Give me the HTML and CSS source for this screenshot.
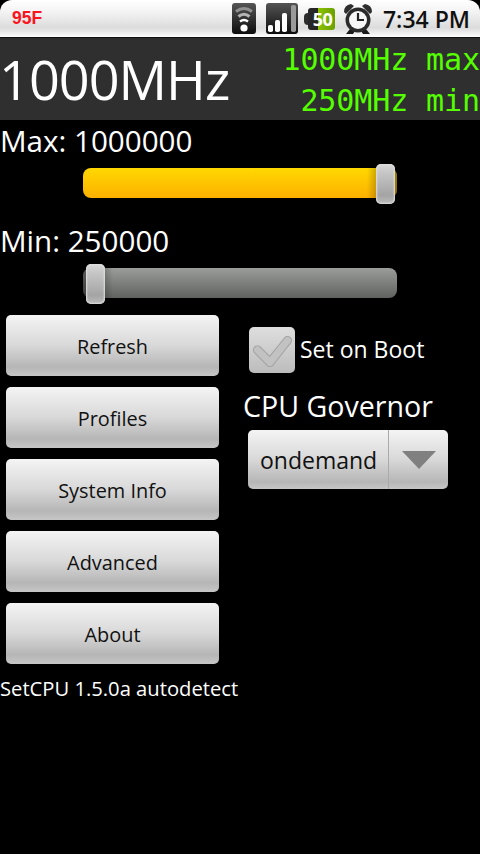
FILE: index.html
```
<!DOCTYPE html>
<html lang="en">
<head>
<meta charset="utf-8">
<title>SetCPU</title>
<link rel="stylesheet" href="styles.css">
</head>
<body>
<div class="status">
  <span class="temp">95F</span>
  <div class="status-icons">
    <svg class="ic-wifi" width="24" height="31" viewBox="0 0 24 31">
      <defs>
        <linearGradient id="tile" x1="0" y1="0" x2="0" y2="1">
          <stop offset="0" stop-color="#555"/>
          <stop offset="1" stop-color="#0c0c0c"/>
        </linearGradient>
      </defs>
      <rect width="24" height="31" rx="3" fill="url(#tile)"/>
      <path d="M4 8.5 Q12 2.5 20 8.5" fill="none" stroke="#909090" stroke-width="3"/>
      <path d="M6.5 13.5 Q12 9 17.5 13.5" fill="none" stroke="#b5b5b5" stroke-width="3"/>
      <path d="M8 18.5 Q12 15.5 16 18.5" fill="none" stroke="#fff" stroke-width="2.4"/>
      <circle cx="12" cy="25" r="3.6" fill="#fff"/>
    </svg>
    <svg class="ic-signal" width="32" height="31" viewBox="0 0 32 31">
      <rect width="32" height="31" rx="3" fill="url(#tile)"/>
      <rect x="2" y="22" width="5" height="7" rx="1.8" fill="#fff"/>
      <rect x="9" y="17" width="5" height="12" rx="1.8" fill="#fff"/>
      <rect x="16" y="10" width="5" height="19" rx="1.8" fill="#fff"/>
      <rect x="25" y="2" width="5" height="27" rx="1.8" fill="#9a9a9a"/>
    </svg>
    <span class="battery"><span class="battery-tip"></span><span class="battery-body"><span class="battery-text">50</span></span></span>
    <svg class="ic-alarm" width="30" height="31" viewBox="0 0 30 31">
      <path d="M1 9 Q1 2 8 1 L11 3 L3 11Z" fill="#2e2e2e"/>
      <path d="M29 9 Q29 2 22 1 L19 3 L27 11Z" fill="#2e2e2e"/>
      <path d="M7 26 L3 31 H10 L12 28Z M23 26 L27 31 H20 L18 28Z" fill="#1c1c1c"/>
      <circle cx="15" cy="17" r="12.5" fill="#2a2a2a"/>
      <circle cx="15" cy="17" r="9" fill="#f6f6f6"/>
      <path d="M15 10 V17 H21" fill="none" stroke="#222" stroke-width="2.2"/>
    </svg>
    <span class="clock">7:34 PM</span>
  </div>
</div>
<header class="header">
  <div class="freq">1000MHz</div>
  <div class="range">
    <div>1000MHz max</div>
    <div>250MHz min</div>
  </div>
</header>
<div class="label label-max">Max: 1000000</div>
<div class="slider track-on">
  <div class="shade shade-end"></div>
  <div class="thumb thumb-end"></div>
</div>
<div class="label label-min">Min: 250000</div>
<div class="slider track-off">
  <div class="shade shade-start"></div>
  <div class="thumb thumb-start"></div>
</div>
<main class="columns">
  <div class="buttons">
    <div class="btn">Refresh</div>
    <div class="btn">Profiles</div>
    <div class="btn">System Info</div>
    <div class="btn">Advanced</div>
    <div class="btn">About</div>
  </div>
  <div class="side">
    <div class="boot">
      <div class="check">
        <svg width="46" height="46" viewBox="0 0 46 46">
          <path d="M8.5 23 L21 35.5 L38.5 13.5" fill="none" stroke="#a0a0a0" stroke-width="9" stroke-linecap="round" stroke-linejoin="round"/>
          <path d="M8.5 23 L21 35.5 L38.5 13.5" fill="none" stroke="#c2c2c2" stroke-width="7" stroke-linecap="round" stroke-linejoin="round"/>
        </svg>
      </div>
      <span class="boot-text">Set on Boot</span>
    </div>
    <div class="gov-title">CPU Governor</div>
    <div class="spinner">
      <span class="spinner-text">ondemand</span>
      <span class="spinner-arrow"><span class="arrow"></span></span>
    </div>
  </div>
</main>
<div class="version">SetCPU 1.5.0a autodetect</div>
</body>
</html>
```
FILE: styles.css
```
* { box-sizing: border-box; }
html, body { margin: 0; padding: 0; }
body {
  width: 480px;
  height: 854px;
  overflow: hidden;
  background: #000;
  color: #fff;
  font-family: "Open Sans", "Noto Sans", sans-serif;
}
.status {
  height: 38px;
  display: flex;
  align-items: center;
  justify-content: space-between;
  padding: 0 10px 0 12px;
  border-radius: 12px 12px 0 0;
  border-bottom: 1px solid #111;
  background: linear-gradient(#fff 0, #f4f4f4 30%, #dcdcdc 75%, #f2f2f2 92%, #fff 100%);
}
.temp {
  color: #fb1420;
  font: bold 17.5px "Liberation Sans", sans-serif;
}
.status-icons { display: flex; align-items: center; }
.status-icons svg { display: block; }
.ic-wifi { margin-right: 10px; }
.ic-signal { margin-right: 6px; }
.ic-alarm { margin-left: 8px; margin-right: 10px; }
.battery { display: flex; align-items: center; width: 31px; height: 22px; margin-top: 1px; }
.battery-tip { width: 4px; height: 12px; background: #2c2c2c; border-radius: 4px 0 0 4px; }
.battery-body {
  width: 27px;
  height: 22px;
  border-radius: 3px;
  background: linear-gradient(90deg, #262626 0, #262626 37%, #8cc200 37%, #6aa000 100%);
  display: flex;
  align-items: center;
  justify-content: center;
}
.battery-text { color: #fff; font: bold 18px "Open Sans", sans-serif; letter-spacing: -0.5px; margin-left: 2px; }
.clock { color: #111; font: 600 23px "Open Sans", sans-serif; white-space: nowrap; }
.header {
  height: 82px;
  background: #2f2f2f;
  display: flex;
  justify-content: space-between;
  align-items: center;
}
.freq { font-size: 54px; line-height: 76px; margin-left: -1px; letter-spacing: -1px; }
.range {
  color: #55ff00;
  font: 30px/41px "DejaVu Sans Mono", monospace;
  text-align: right;
  white-space: nowrap;
  letter-spacing: -0.1px;
  padding-top: 2px;
}
.label { font-size: 29.6px; line-height: 40px; }
.label-max { margin-top: 1px; height: 47px; }
.label-min { margin-top: 23px; height: 47px; }
.slider {
  position: relative;
  margin-left: 83px;
  width: 314px;
  height: 30px;
  border-radius: 8px;
}
.track-on { background: linear-gradient(#ffd800, #fdb000); }
.track-off { background: linear-gradient(#9a9d99, #5f625f); }
.shade { position: absolute; top: 0; bottom: 0; width: 30px; }
.shade-end { right: 0; border-radius: 0 8px 8px 0; background: linear-gradient(90deg, rgba(0,0,0,0) 0, rgba(0,0,0,.4) 60%, rgba(0,0,0,.4) 100%); }
.shade-start { left: 0; border-radius: 8px 0 0 8px; background: linear-gradient(270deg, rgba(0,0,0,0) 0, rgba(0,0,0,.4) 60%, rgba(0,0,0,.4) 100%); }
.thumb {
  position: absolute;
  top: -4px;
  width: 19px;
  height: 40px;
  border-radius: 5px;
  background: linear-gradient(#d8d8d8, #c4c4c4 25%, #a4a4a4 78%, #bcbcbc);
  box-shadow: inset 0 0 2px 1px #e0e0e0;
}
.thumb-end { right: 2px; }
.thumb-start { left: 3px; }
.columns { display: flex; margin-top: 17px; align-items: flex-start; }
.buttons { display: flex; flex-direction: column; gap: 11px; padding-left: 6px; width: 219px; flex: none; }
.btn {
  height: 61px;
  padding-top: 1px;
  border-radius: 5px;
  background: linear-gradient(#f4f4f4, #d8d8d8 50%, #b6b6b6 85%, #c6c6c6);
  color: #111;
  font-size: 19.9px;
  display: flex;
  align-items: center;
  justify-content: center;
}
.side { padding-left: 30px; }
.boot { display: flex; align-items: center; margin-top: 12px; height: 46px; }
.check {
  width: 46px;
  height: 46px;
  border-radius: 5px;
  background: linear-gradient(#dedede, #bcbcbc);
}
.check svg { display: block; }
.boot-text { font-size: 23px; margin-left: 5px; margin-top: -2px; }
.gov-title { font-size: 28.6px; line-height: 40px; margin: 13px 0 4px -6px; white-space: nowrap; }
.spinner {
  display: flex;
  width: 200px;
  height: 59px;
  margin-left: -1px;
  border-radius: 5px;
  overflow: hidden;
  background: linear-gradient(#f4f4f4, #d8d8d8 50%, #b6b6b6 88%, #c6c6c6);
  color: #111;
}
.spinner-text {
  width: 141px;
  font-size: 23px;
  padding-left: 12px;
  display: flex;
  align-items: center;
  border-right: 1px solid #aaa;
}
.spinner-arrow { flex: 1; display: flex; align-items: center; justify-content: center; }
.arrow {
  width: 0;
  height: 0;
  border-left: 17px solid transparent;
  border-right: 17px solid transparent;
  border-top: 18px solid #808080;
}
.version { font-size: 20.2px; line-height: 28px; margin-top: 10px; }
```
